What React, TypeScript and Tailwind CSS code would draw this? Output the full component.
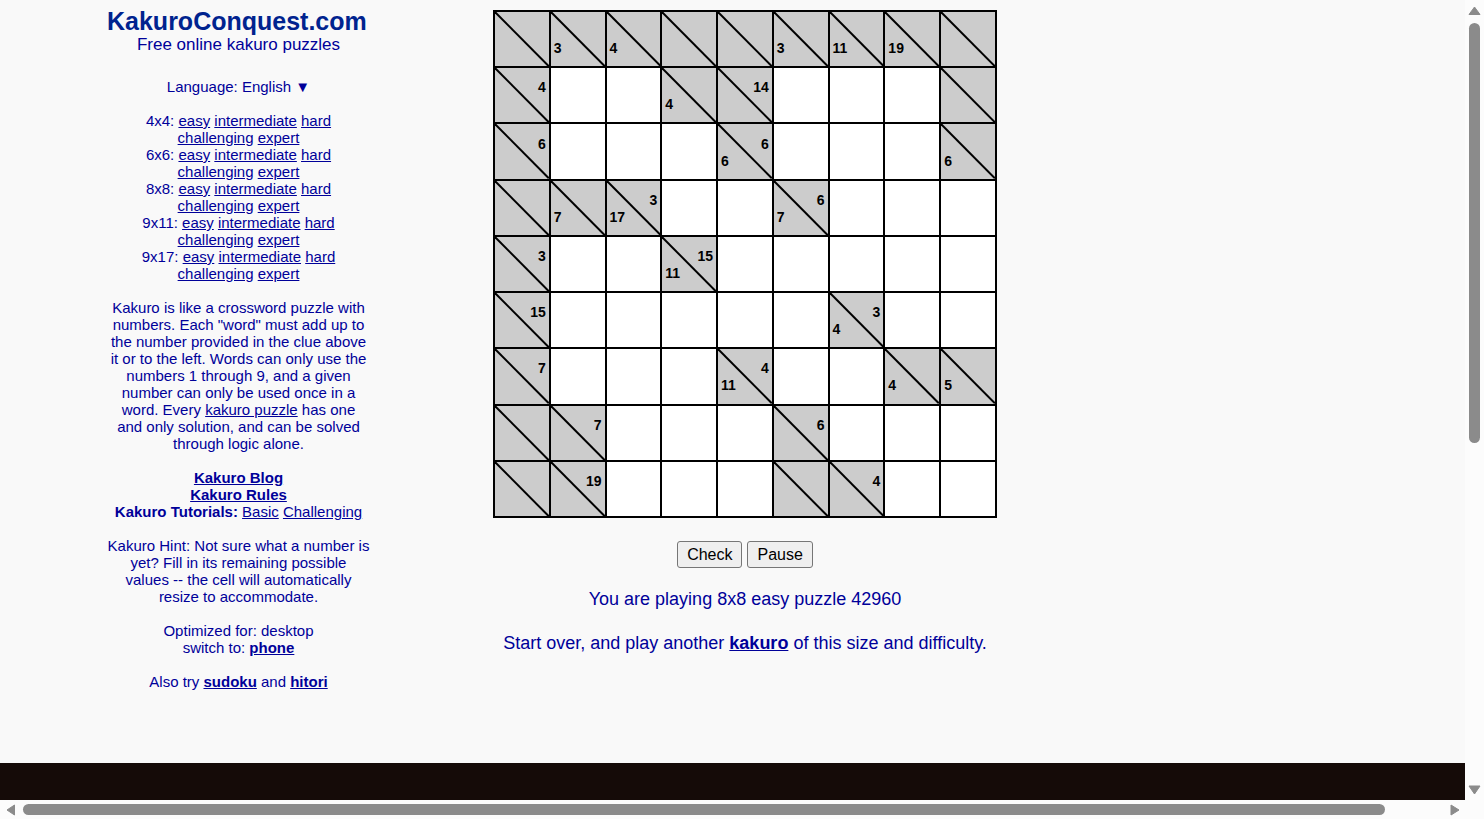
import React, { useState } from "react";

type Cell = null | { right?: number; down?: number };

const open: Cell = null;
const block: Cell = {};
const r = (right: number): Cell => ({ right });
const d = (down: number): Cell => ({ down });
const rd = (right: number, down: number): Cell => ({ right, down });

const board: Cell[][] = [
  [block, d(3), d(4), block, block, d(3), d(11), d(19), block],
  [r(4), open, open, d(4), r(14), open, open, open, block],
  [r(6), open, open, open, rd(6, 6), open, open, open, d(6)],
  [block, d(7), rd(3, 17), open, open, rd(6, 7), open, open, open],
  [r(3), open, open, rd(15, 11), open, open, open, open, open],
  [r(15), open, open, open, open, open, rd(3, 4), open, open],
  [r(7), open, open, open, rd(4, 11), open, open, d(4), d(5)],
  [block, r(7), open, open, open, r(6), open, open, open],
  [block, r(19), open, open, open, block, r(4), open, open],
];

const sizes = ["4x4", "6x6", "8x8", "9x11", "9x17"];

function Link({ children, bold = false }: { children: React.ReactNode; bold?: boolean }) {
  return (
    <a href="#" className={bold ? "font-bold underline" : "underline"}>
      {children}
    </a>
  );
}

function BoardCell({ cell, label }: { cell: Cell; label: string }) {
  if (cell === null) {
    return (
      <td className="bg-white p-0">
        <input
          aria-label={label}
          className="block size-full bg-transparent text-center text-2xl text-black outline-none"
        />
      </td>
    );
  }
  return (
    <td className="relative bg-[#cccccc] p-0">
      <svg
        className="absolute inset-0 size-full"
        viewBox="0 0 54 54"
        preserveAspectRatio="none"
        aria-hidden="true"
      >
        <line x1="0" y1="0" x2="54" y2="54" stroke="#000" strokeWidth="2" />
      </svg>
      <div className="relative flex flex-col px-[3px] pt-0.5 text-sm/[17px] font-bold text-black">
        <span className="h-[17px] text-right">{cell.right}</span>
        <span className="h-[17px]">{cell.down}</span>
      </div>
    </td>
  );
}

function Sidebar() {
  return (
    <aside className="w-[263px] shrink-0 pt-2 text-center text-[15px]/[17px]">
      <h1 className="text-left text-[25px]/[27px] font-bold text-[#00238f]">KakuroConquest.com</h1>
      <p className="text-[17px]/[19px]">Free online kakuro puzzles</p>
      <div className="mt-6 flex flex-col gap-[17px]">
        <p>Language: English ▼</p>
        <div>
          {sizes.map((size) => (
            <p key={size}>
              {size}: <Link>easy</Link> <Link>intermediate</Link> <Link>hard</Link>
              <br />
              <Link>challenging</Link> <Link>expert</Link>
            </p>
          ))}
        </div>
        <p>
          Kakuro is like a crossword puzzle with numbers. Each "word" must add up to the number
          provided in the clue above it or to the left. Words can only use the numbers 1 through 9,
          and a given number can only be used once in a word. Every <Link>kakuro puzzle</Link> has
          one
          <br />
          and only solution, and can be solved through logic alone.
        </p>
        <div>
          <p><Link bold>Kakuro Blog</Link></p>
          <p><Link bold>Kakuro Rules</Link></p>
          <p>
            <b>Kakuro Tutorials:</b> <Link>Basic</Link> <Link>Challenging</Link>
          </p>
        </div>
        <p>
          Kakuro Hint: Not sure what a number is yet? Fill in its remaining possible
          <br />
          values -- the cell will automatically
          <br />
          resize to accommodate.
        </p>
        <p>
          Optimized for: desktop
          <br />
          switch to: <Link bold>phone</Link>
        </p>
        <p>
          Also try <Link bold>sudoku</Link> and <Link bold>hitori</Link>
        </p>
      </div>
    </aside>
  );
}

const buttonClass =
  "h-[27px] rounded-[3px] border border-[#767676] bg-[#efefef] px-[9px] text-base/[18px] text-black";

function Puzzle() {
  const [paused, setPaused] = useState(false);
  return (
    <main className="flex w-[504px] shrink-0 flex-col items-center pt-2.5 text-lg/[22px]">
      <table className="h-[508px] w-full table-fixed border-separate border-spacing-[2px] bg-black">
        <tbody>
          {board.map((row, y) => (
            <tr key={y}>
              {row.map((cell, x) => (
                <BoardCell key={x} cell={cell} label={`Row ${y + 1}, column ${x + 1}`} />
              ))}
            </tr>
          ))}
        </tbody>
      </table>
      <div className="mt-[23px] flex gap-[5px]">
        <button type="button" className={buttonClass}>Check</button>
        <button type="button" className={buttonClass} onClick={() => setPaused(!paused)}>
          {paused ? "Resume" : "Pause"}
        </button>
      </div>
      <p className="mt-5">You are playing 8x8 easy puzzle 42960</p>
      <p className="mt-[22px]">
        Start over, and play another <Link bold>kakuro</Link> of this size and difficulty.
      </p>
    </main>
  );
}

function Arrow({ className, points, box }: { className: string; points: string; box: string }) {
  return (
    <svg className={className} viewBox={box} aria-hidden="true">
      <polygon points={points} fill="#8b8b8b" stroke="#8b8b8b" strokeWidth="1" strokeLinejoin="round" />
    </svg>
  );
}

export default function App() {
  return (
    <div
      className="grid h-screen grid-cols-[minmax(0,1fr)_19px] grid-rows-[minmax(0,1fr)_19px] overflow-hidden bg-[#fcfcfc] text-[#000099]"
      style={{ fontFamily: '"Liberation Sans", Arial, sans-serif' }}
    >
      <div className="flex flex-col overflow-hidden bg-[#f9f9f9]">
        <div className="flex min-h-0 flex-1 gap-[123px] pl-[107px]">
          <Sidebar />
          <Puzzle />
        </div>
        <footer className="h-[37px] shrink-0 bg-[#150b08]" />
      </div>
      <div className="flex flex-col items-center pt-1.5 pb-[5px]">
        <Arrow className="h-[9px] w-[13px] shrink-0" box="0 0 13 9" points="6.5,1 12,8.5 1,8.5" />
        <div className="mt-2 w-[11px] grow-[420] basis-0 rounded-full bg-[#8b8b8b]" />
        <div className="grow-[342] basis-0" />
        <Arrow className="h-[10px] w-[13px] shrink-0" box="0 0 13 10" points="6.5,9 12,1 1,1" />
      </div>
      <div className="flex items-center pr-[5px] pl-1.5">
        <Arrow className="h-[12px] w-[9px] shrink-0" box="0 0 9 12" points="1,6 8.5,1 8.5,11" />
        <div className="ml-2 h-[11px] grow-[1362] basis-0 rounded-full bg-[#8b8b8b]" />
        <div className="grow-[65] basis-0" />
        <Arrow className="h-[12px] w-[10px] shrink-0" box="0 0 10 12" points="9,6 1,1 1,11" />
      </div>
    </div>
  );
}
